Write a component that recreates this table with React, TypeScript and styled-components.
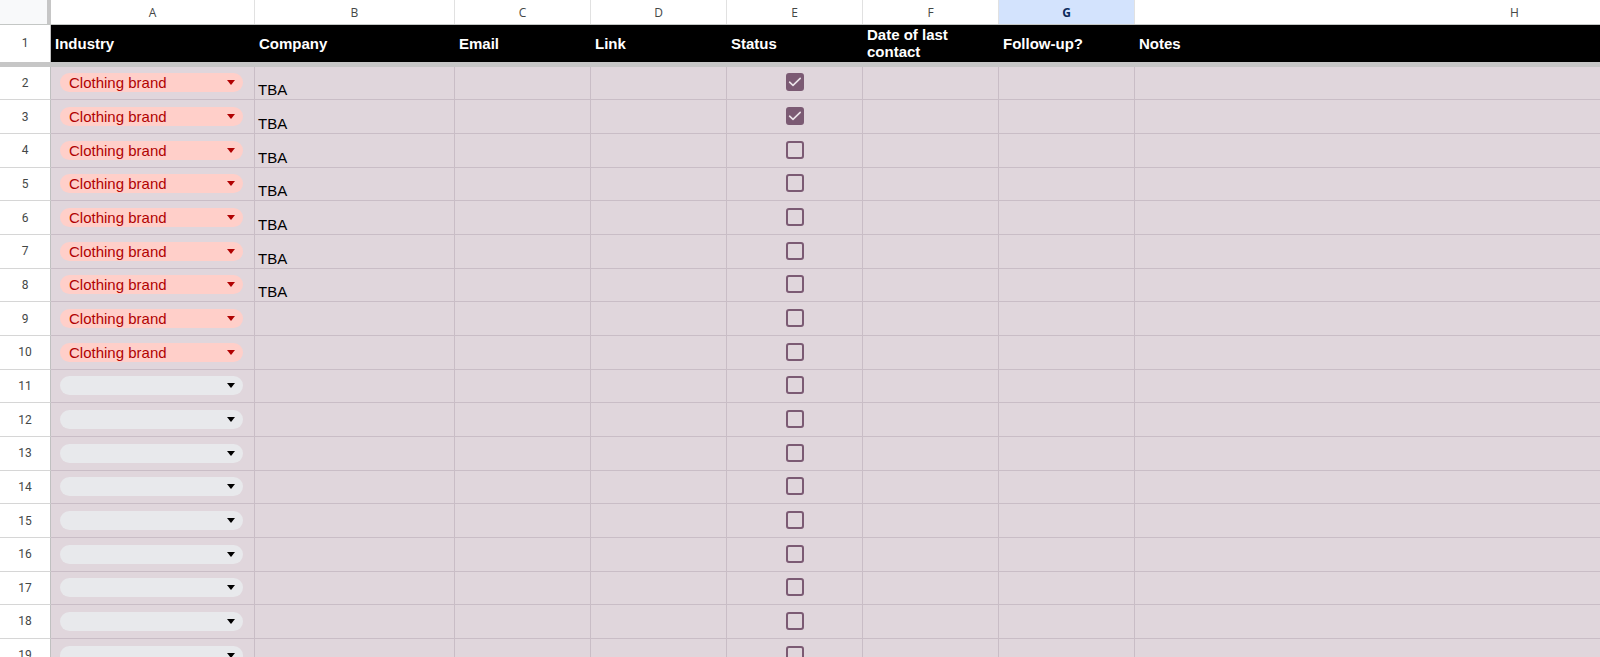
import React from "react";
import styled, { createGlobalStyle } from "styled-components";

const GlobalStyle = createGlobalStyle`
  html, body {
    margin: 0;
    padding: 0;
    width: 1600px;
    height: 657px;
    overflow: hidden;
    background: #ffffff;
  }
  * { box-sizing: border-box; }
`;

const COLS = "51px 204px 200px 136px 136px 136px 136px 136px 760px";
const CELL_BG = "#e0d6dc";
const GRID = "#c9bdc6";
const ACCENT = "#7b5a73";

const Sheet = styled.div`
  width: 1600px;
  height: 657px;
  overflow: hidden;
  display: flex;
  flex-direction: column;
  font-family: Arial, "Liberation Sans", sans-serif;
`;

const ColumnHeaderRow = styled.div`
  display: grid;
  grid-template-columns: ${COLS};
  height: 25px;
  flex: none;
  border-bottom: 1px solid #c4c7c5;
  background: #ffffff;
`;

const CornerCell = styled.div`
  border-right: 4px solid #c6c6c6;
  background: #f8f9fa;
`;

const ColumnLetter = styled.div<{ $selected?: boolean }>`
  display: flex;
  align-items: center;
  justify-content: center;
  font-family: "Open Sans", Roboto, sans-serif;
  font-size: 12px;
  font-weight: ${(p) => (p.$selected ? 700 : 400)};
  color: ${(p) => (p.$selected ? "#0b2a5c" : "#444746")};
  background: ${(p) => (p.$selected ? "#d3e3fd" : "#ffffff")};
  border-right: 1px solid #e1e1e1;
`;

const HeaderRow = styled.div`
  display: grid;
  grid-template-columns: ${COLS};
  height: 41.67px;
  flex: none;
  border-bottom: 5px solid #c6c6c6;
`;

const RowNumber = styled.div`
  display: flex;
  align-items: center;
  justify-content: center;
  font-family: Roboto, "Open Sans", sans-serif;
  font-size: 12px;
  color: #444746;
  background: #ffffff;
  border-right: 1px solid #c0c0c0;
  border-bottom: 1px solid #d6d6d6;
`;

const HeaderNumber = styled(RowNumber)`
  border-bottom: none;
`;

const HeaderCell = styled.div`
  display: flex;
  align-items: center;
  padding: 0 4px;
  background: #000000;
  color: #ffffff;
  font-size: 15px;
  font-weight: 700;
  line-height: 17px;
  white-space: normal;
`;

const Row = styled.div`
  display: grid;
  grid-template-columns: ${COLS};
  height: 33.67px;
  flex: none;
`;

const Cell = styled.div<{ $align?: "bottom" | "center"; $justify?: "center" | "start" }>`
  display: flex;
  align-items: ${(p) => (p.$align === "bottom" ? "flex-end" : "center")};
  justify-content: ${(p) => (p.$justify === "center" ? "center" : "flex-start")};
  background: ${CELL_BG};
  border-right: 1px solid ${GRID};
  border-bottom: 1px solid ${GRID};
  padding: 0 3px 1px 3px;
  font-size: 15px;
  color: #000000;
  overflow: hidden;
  white-space: nowrap;
`;

const ChipCell = styled(Cell)`
  padding: 0 11px 0 9px;
`;

const Chip = styled.div<{ $empty?: boolean }>`
  flex: 1;
  height: 19px;
  border-radius: 10px;
  display: flex;
  align-items: center;
  justify-content: space-between;
  padding: 0 8px 0 9px;
  background: ${(p) => (p.$empty ? "#e8e9ec" : "#ffcfc9")};
  color: #b10202;
  font-size: 15px;
  line-height: 19px;
`;

const ChipArrow = styled.span<{ $empty?: boolean }>`
  width: 0;
  height: 0;
  border-left: 4.5px solid transparent;
  border-right: 4.5px solid transparent;
  border-top: 5px solid ${(p) => (p.$empty ? "#000000" : "#b10202")};
  margin-left: auto;
`;

const Checkbox = styled.div<{ $checked?: boolean }>`
  width: 18px;
  height: 18px;
  margin-left: 1px;
  border-radius: 3px;
  border: 2px solid ${ACCENT};
  background: ${(p) => (p.$checked ? ACCENT : "transparent")};
  display: flex;
  align-items: center;
  justify-content: center;
`;

const CheckMark = () => (
  <svg width="14" height="14" viewBox="0 0 14 14" fill="none">
    <path d="M1.6 7.2 L5 10.4 L12.2 3.4" stroke="#ebe3e9" strokeWidth="1.6" strokeLinecap="round" strokeLinejoin="round" />
  </svg>
);

const letters = ["A", "B", "C", "D", "E", "F", "G", "H"];
const headers = ["Industry", "Company", "Email", "Link", "Status", "Date of last contact", "Follow-up?", "Notes"];

type RowData = { n: number; industry?: string; company?: string; checked?: boolean };

const rows: RowData[] = Array.from({ length: 19 }, (_, i) => {
  const n = i + 2;
  return {
    n,
    industry: n <= 10 ? "Clothing brand" : undefined,
    company: n <= 8 ? "TBA" : undefined,
    checked: n <= 3,
  };
});

export default function App() {
  return (
    <>
      <GlobalStyle />
      <Sheet>
        <ColumnHeaderRow>
          <CornerCell />
          {letters.map((l) => (
            <ColumnLetter key={l} $selected={l === "G"}>
              {l}
            </ColumnLetter>
          ))}
        </ColumnHeaderRow>
        <HeaderRow>
          <HeaderNumber>1</HeaderNumber>
          {headers.map((h) => (
            <HeaderCell key={h}>{h}</HeaderCell>
          ))}
        </HeaderRow>
        {rows.map((r) => (
          <Row key={r.n}>
            <RowNumber>{r.n}</RowNumber>
            <ChipCell>
              <Chip $empty={!r.industry}>
                {r.industry && <span>{r.industry}</span>}
                <ChipArrow $empty={!r.industry} />
              </Chip>
            </ChipCell>
            <Cell $align="bottom">{r.company}</Cell>
            <Cell />
            <Cell />
            <Cell $justify="center">
              <Checkbox $checked={r.checked}>{r.checked && <CheckMark />}</Checkbox>
            </Cell>
            <Cell />
            <Cell />
            <Cell />
          </Row>
        ))}
      </Sheet>
    </>
  );
}
